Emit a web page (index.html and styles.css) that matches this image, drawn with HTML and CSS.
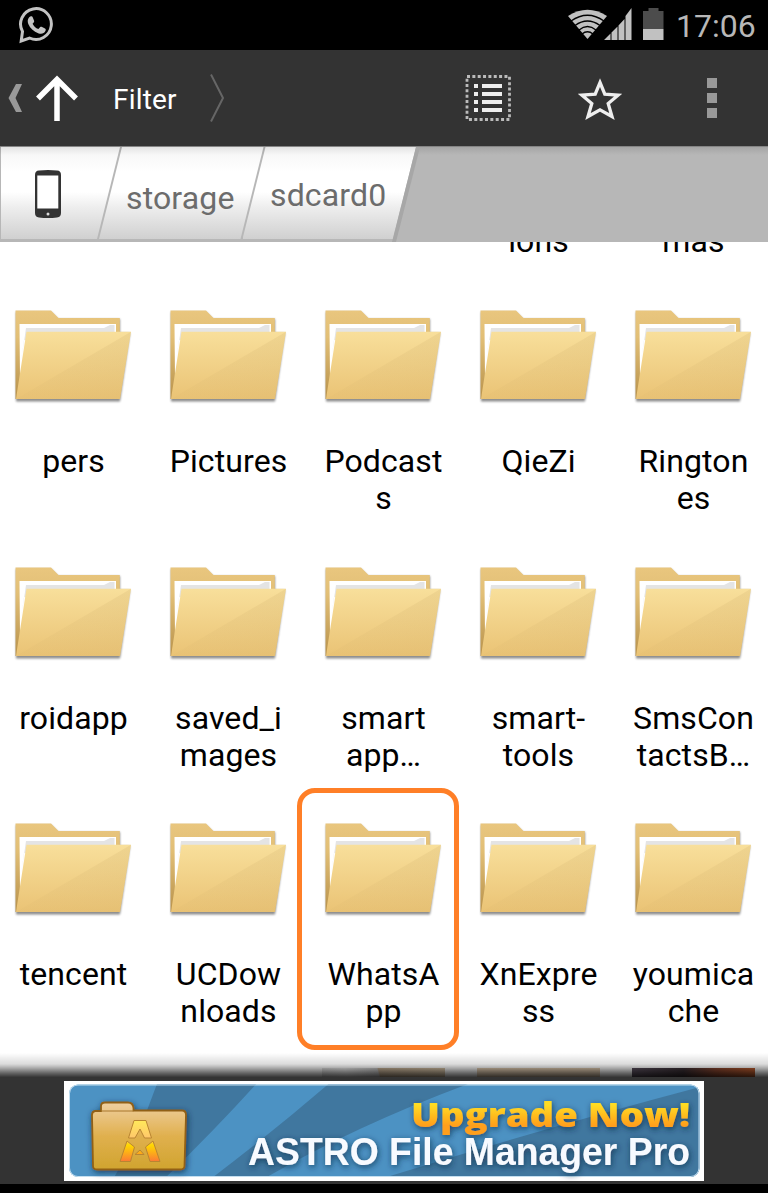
FILE: index.html
```
<!DOCTYPE html>
<html lang="en">
<head>
  <meta charset="UTF-8" />
  <meta name="viewport" content="width=device-width, initial-scale=1.0"/>
  <title>File Manager</title>
  <link rel="stylesheet" href="styles.css">
</head>
<body>

  <div class="status-bar">
    <svg class="chat-icon" width="36" height="38" viewBox="0 0 36 38">
      <path d="M4.500 25.500 A15.400 15.400 0 1 1 11.500 32 L3.200 35 Z" fill="none" stroke="#c3c3c3" stroke-width="3"/>
      <path d="M11 11.500 c1.500 -1.700 3.200 -1.500 3.900 .2 l1.200 3 c.3 1 -.2 1.700 -1.500 3 c1.300 2.500 3 4.200 5.800 5.400 l1.800 -2 c.6 -.6 1.200 -.5 1.900 -.1 l2.900 1.500 c1 .6 .9 1.500 .4 2.600 c-1.200 2.600 -4 3.200 -6.700 2.300 c-5.200 -1.600 -8.700 -5.200 -10.400 -9.300 c-.9 -2.400 -.8 -4.800 .7 -6.600 Z" fill="#c3c3c3"/>
    </svg>
    <div class="status-right">
      <svg width="96" height="34" viewBox="0 0 96 34">
        <path d="M0 8 Q19.500 -4.500 39 8 L19.500 31 Z" fill="#c1c1c1"/>
        <g fill="none" stroke="#000" stroke-width="1.300">
          <path d="M3 13 Q19.500 1.500 36 13"/>
          <path d="M7 17.500 Q19.500 8.500 32 17.500"/>
          <path d="M11 22 Q19.500 15 28 22"/>
          <path d="M14 26 Q19.500 21.500 25 26"/>
        </g>
        <path d="M36 32 L42.500 25.500 V32 Z M43.500 24.500 L49.500 18.500 V32 H43.500 Z M50.500 17.500 L56.500 11 V32 H50.500 Z M57.500 8 L63.500 0 V32 H57.500 Z" fill="#c1c1c1"/>
        <path d="M75 3 H80.500 V0 H90.500 V3 H95.500 V21 H75 Z" fill="#4c4c4c"/>
        <rect x="75" y="21" width="20.500" height="11" fill="#c1c1c1"/>
      </svg>
      <span class="clock">17:06</span>
    </div>
  </div>

  <div class="action-bar">
    <svg class="up" width="90" height="50" viewBox="0 0 90 50">
      <path d="M16 11 H22 L15.500 25 L22 39 H16 L8.500 25 Z" fill="#999"/>
      <path d="M57 48 V8 M38 25.500 L57 6.500 L76 25.500" fill="none" stroke="#fff" stroke-width="5.500"/>
    </svg>
    <span class="title">Filter</span>
    <svg class="chevron" width="16" height="50" viewBox="0 0 16 50">
      <path d="M2 1.500 L14 25 L2 48.500" fill="none" stroke="#666" stroke-width="2"/>
    </svg>
    <div class="actions">
      <svg width="48" height="48" viewBox="0 0 48 48">
        <rect x="3" y="2.500" width="42.500" height="43" fill="none" stroke="#bbb" stroke-width="2.800" stroke-dasharray="3 2.350"/>
        <path d="M10 12 H14 M10 20 H14 M10 28 H14 M10 36 H14 M18 12 H38 M18 20 H38 M18 28 H38 M18 36 H38" stroke="#eee" stroke-width="4"/>
      </svg>
      <svg width="44" height="42" viewBox="0 0 44 42">
        <path d="M22 4.500 L26.800 16.200 L40 17.200 L30.200 25.500 L34 38.500 L22 31.800 L10 38.500 L13.800 25.500 L4 17.200 L17.200 16.200 Z" fill="none" stroke="#eee" stroke-width="3.300"/>
      </svg>
      <div class="overflow"><i></i><i></i><i></i></div>
    </div>
  </div>

  <div class="breadcrumbs">
    <div class="crumb crumb-root">
      <svg width="26" height="48" viewBox="0 0 26 48">
        <path d="M0 5 Q0 .5 4 .5 Q13 -.5 22 .5 Q26 .5 26 5 V43 Q26 47 22 47.500 Q13 48.500 4 47.500 Q0 47 0 43 Z" fill="#333"/>
        <rect x="2.300" y="5.500" width="21" height="33" fill="#fff"/>
        <circle cx="13" cy="44" r="1.500" fill="#ddd"/>
      </svg>
    </div>
    <div class="crumb crumb-storage">storage</div>
    <div class="crumb crumb-card">sdcard0</div>
    <div class="crumb-edge"></div>
  </div>

  <div class="files">
    <div class="row-cut">
      <div class="name">ions</div>
      <div class="name">mas</div>
    </div>

    <svg class="defs" width="0" height="0">
      <defs>
        <linearGradient id="front" x1="0" y1="0" x2="0" y2="1">
          <stop offset="0" stop-color="#f8df9b"/>
          <stop offset="1" stop-color="#eac375"/>
        </linearGradient>
        <linearGradient id="back" x1="0" y1="0" x2="0" y2="1">
          <stop offset="0" stop-color="#e9c67e"/>
          <stop offset=".3" stop-color="#e2bf76"/>
          <stop offset="1" stop-color="#b8924c"/>
        </linearGradient>
        <linearGradient id="fold" x1="0" y1="1" x2="1" y2="0">
          <stop offset="0" stop-color="#c8a866" stop-opacity=".05"/>
          <stop offset="1" stop-color="#c8a866" stop-opacity=".2"/>
        </linearGradient>
        <filter id="soft" x="-10%" y="-10%" width="120%" height="125%">
          <feGaussianBlur stdDeviation="1.300"/>
        </filter>
        <symbol id="folder" viewBox="0 0 146 110">
          <path d="M16 12 H51 L58 19 H120 V33 H130 L120 101.500 H16 Z" fill="#000" opacity=".45" filter="url(#soft)"/>
          <path d="M15.500 10.500 H51 L58.500 18 H119.800 V60 H30 V99 H15.500 Z" fill="url(#back)"/>
          <path d="M19.500 24 H116 V40 H30 L20 80 Z" fill="#fff"/>
          <path d="M26 28 H104 L110 25 H114.500 V40 H24 L21 62 Z" fill="#e4e4e4"/>
          <path d="M26.500 31.700 H131 L120 99 H16 Z" fill="url(#front)"/>
          <path d="M131 31.700 L120 99 H16 Z" fill="url(#fold)"/>
        </symbol>
      </defs>
    </svg>

    <div class="grid">
      <div class="file"><svg><use href="#folder"/></svg><div class="name">pers</div></div>
      <div class="file"><svg><use href="#folder"/></svg><div class="name">Pictures</div></div>
      <div class="file"><svg><use href="#folder"/></svg><div class="name">Podcast<br>s</div></div>
      <div class="file"><svg><use href="#folder"/></svg><div class="name">QieZi</div></div>
      <div class="file"><svg><use href="#folder"/></svg><div class="name">Rington<br>es</div></div>

      <div class="file"><svg><use href="#folder"/></svg><div class="name">roidapp</div></div>
      <div class="file"><svg><use href="#folder"/></svg><div class="name">saved_i<br>mages</div></div>
      <div class="file"><svg><use href="#folder"/></svg><div class="name">smart<br>app…</div></div>
      <div class="file"><svg><use href="#folder"/></svg><div class="name">smart-<br>tools</div></div>
      <div class="file"><svg><use href="#folder"/></svg><div class="name">SmsCon<br>tactsB…</div></div>

      <div class="file"><svg><use href="#folder"/></svg><div class="name">tencent</div></div>
      <div class="file"><svg><use href="#folder"/></svg><div class="name">UCDow<br>nloads</div></div>
      <div class="file marked"><svg><use href="#folder"/></svg><div class="name">WhatsA<br>pp</div></div>
      <div class="file"><svg><use href="#folder"/></svg><div class="name">XnExpre<br>ss</div></div>
      <div class="file"><svg><use href="#folder"/></svg><div class="name">youmica<br>che</div></div>
    </div>

    <div class="thumbs">
      <div class="thumb thumb-paper"></div>
      <div class="thumb thumb-sand"></div>
      <div class="thumb thumb-sunset"></div>
    </div>
  </div>

  <div class="ad-bar">
    <svg class="ad" width="640" height="100" viewBox="0 0 640 100">
      <defs>
        <clipPath id="adClip"><rect x="5" y="3.500" width="630.500" height="92.500" rx="9"/></clipPath>
        <linearGradient id="gold" x1="0" y1="0" x2="0" y2="1">
          <stop offset=".3" stop-color="#ffdc22"/>
          <stop offset=".75" stop-color="#ff9f1c"/>
        </linearGradient>
        <linearGradient id="case" x1="0" y1="0" x2="0" y2="1">
          <stop offset="0" stop-color="#efcfa0"/>
          <stop offset=".5" stop-color="#e0b04e"/>
          <stop offset="1" stop-color="#d0a42f"/>
        </linearGradient>
        <linearGradient id="flame" x1="0" y1="0" x2="0" y2="1">
          <stop offset="0" stop-color="#ffe95a"/>
          <stop offset=".45" stop-color="#ffc56c"/>
          <stop offset=".6" stop-color="#ffd800"/>
          <stop offset="1" stop-color="#fb7a35"/>
        </linearGradient>
        <filter id="shade" x="-10%" y="-20%" width="120%" height="150%">
          <feDropShadow dx="1" dy="2" stdDeviation="3" flood-color="#0e2c44" flood-opacity=".75"/>
        </filter>
      </defs>
      <rect width="640" height="100" fill="#fff"/>
      <g clip-path="url(#adClip)">
        <rect width="640" height="100" fill="#4c92c3"/>
        <path d="M94 0 H195 Q150 50 98 100 H48 Q75 55 94 0 Z" fill="#40779f"/>
        <path d="M268 0 H412 Q290 45 196 100 H144 Q210 50 268 0 Z" fill="#40779f"/>
        <path d="M640 5 Q470 50 310 100 H640 Z" fill="#40779f"/>
        <rect x="5" y="3.500" width="630.500" height="92.500" rx="9" fill="none" stroke="#c4dff0" stroke-width="2"/>
      </g>
      <g filter="url(#shade)">
        <path d="M37 30 V25 Q37 21.500 41 21.500 H64 Q69 21.500 69.500 27 V29.500 H118 Q122 29.500 122 34 L120.500 85 Q120.500 88.500 116 88.500 H33 Q29 88.500 29 85 L28 34 Q28 30.500 31 30 Z" fill="url(#case)" stroke="#916014" stroke-width="1.800"/>
      </g>
      <path d="M37 30 H69.500" stroke="#a8762a" stroke-width="1"/>
      <path d="M70 39.500 H82 L87.500 57 H80.500 L76 48 L71 57 H64.500 Z M63 60 L70.500 66 L66.500 80.500 H56 Z M81.500 66 L89 60 L96 80.500 H86 Z M71 73.500 L76 69 L80 73.500 Z" fill="url(#flame)" stroke="#b98532" stroke-width="1"/>
      <g filter="url(#shade)">
        <text class="ad-top" x="347" y="46" textLength="279" lengthAdjust="spacingAndGlyphs" fill="url(#gold)">Upgrade Now!</text>
        <text class="ad-main" x="184" y="84" textLength="442" lengthAdjust="spacingAndGlyphs" fill="#f7faff">ASTRO File Manager Pro</text>
      </g>
    </svg>
  </div>

</body>
</html>
```
FILE: styles.css
```
:root {
  --bar: #333;
  --crumb-bg: #b7b7b7;
  --mark: #ff7f27;
}

*, *::before, *::after {
  box-sizing: border-box;
}

body {
  margin: 0;
  width: 768px;
  height: 1193px;
  display: flex;
  flex-direction: column;
  overflow: hidden;
  background: #000;
  font-family: Roboto, sans-serif;
  font-size: 32px;
}

svg {
  display: block;
  flex: none;
}

.status-bar {
  height: 50px;
  flex: none;
  display: flex;
  justify-content: space-between;
  padding: 6px 11px 0 18px;
  color: #b8b8b8;
}

.status-right {
  display: flex;
  gap: 12px;
}

.status-right svg {
  margin-top: 2px;
}

.clock {
  width: 81px;
  line-height: 40px;
}

.action-bar {
  height: 97px;
  flex: none;
  display: flex;
  align-items: center;
  background: var(--bar);
  border-bottom: 1px solid #858585;
  color: #fff;
}

.title {
  margin-left: 23px;
  width: 96px;
  font-size: 28px;
  letter-spacing: .2px;
  padding-top: 2px;
}

.actions {
  margin-left: auto;
  display: flex;
  align-items: center;
  padding-right: 51px;
}

.actions svg:nth-child(2) {
  margin: 2px 85px 0 66px;
}

.overflow {
  display: flex;
  flex-direction: column;
  gap: 5px;
}

.overflow i {
  width: 10px;
  height: 10px;
  background: #999;
}

.breadcrumbs {
  height: 95px;
  flex: none;
  display: flex;
  background: linear-gradient(#a5a5a5, var(--crumb-bg) 8px);
  color: #6c6c6c;
}

.crumb {
  height: 92px;
  line-height: 102px;
  letter-spacing: .15px;
  background: linear-gradient(#e3e3e3, #f8f8f8 8px, #fff 25px, #fff 45px, #eee 60px, #d0d0d0);
}

.crumb-root {
  width: 119px;
  margin-left: 1px;
  padding: 23px 0 0 34px;
  clip-path: polygon(0 0, 100% 0, calc(100% - 23px) 100%, 0 100%);
}

.crumb-storage,
.crumb-card {
  clip-path: polygon(23px 0, 100% 0, calc(100% - 23px) 100%, 0 100%);
}

.crumb-storage {
  width: 164.5px;
  margin-left: -21px;
  padding-left: 27px;
}

.crumb-card {
  width: 173.5px;
  margin-left: -21px;
  padding-left: 27.5px;
  line-height: 97px;
}

.crumb-edge {
  width: 28px;
  margin-left: -24px;
  background: #a7a7a7;
  clip-path: polygon(24px 0, 28px 0, 4px 100%, 0 100%);
}

.files {
  position: relative;
  height: 835px;
  flex: none;
  overflow: hidden;
  background: #fff;
}

/* fade into the ad bar */
.files::after {
  content: "";
  position: absolute;
  left: 0;
  right: 0;
  bottom: 0;
  height: 24px;
  background: linear-gradient(rgba(0, 0, 0, 0), rgba(0, 0, 0, .14) 11px, rgba(0, 0, 0, .28) 14px, rgba(0, 0, 0, .6) 20px, rgba(0, 0, 0, .79));
}

.name {
  line-height: 37px;
  letter-spacing: .1px;
  padding-left: 1px;
  text-align: center;
}

.row-cut {
  display: flex;
  gap: 9px;
  height: 58px;
  padding-left: 465px;
}

.row-cut .name {
  width: 146px;
  margin-top: -19px;
}

.defs {
  position: absolute;
}

.grid {
  display: grid;
  grid-template-columns: repeat(5, 146px);
  grid-auto-rows: 256.5px;
  column-gap: 9px;
}

.file svg {
  width: 146px;
  height: 110px;
}

.file .name {
  margin-top: 33px;
}

.marked {
  position: relative;
}

.marked::before {
  content: "";
  position: absolute;
  left: -13px;
  top: -25px;
  width: 162px;
  height: 262px;
  border: 5px solid var(--mark);
  border-radius: 18px;
}

.thumbs {
  display: flex;
  gap: 32px;
  margin-top: -1.5px;
  padding-left: 322px;
}

.thumb {
  width: 123px;
  height: 40px;
}

.thumb-paper {
  background: linear-gradient(75deg, #ddd 0, #f0f0f0 25%, #ccc 49%, #c9b499 50%, #d9c5a8);
}

.thumb-sand {
  background: #e6d0b4;
}

.thumb-sunset {
  background: linear-gradient(100deg, #5c5160, #3b3036 40%, #8a4630 65%, #c8622f);
}

.ad-bar {
  height: 107px;
  flex: none;
  padding: 4px 0 0 64px;
  background: var(--bar);
}

.ad-top {
  font: 800 34px "Open Sans", "DejaVu Sans", sans-serif;
}

.ad-main {
  font: bold 38px "Liberation Sans", Arial, sans-serif;
}
```
